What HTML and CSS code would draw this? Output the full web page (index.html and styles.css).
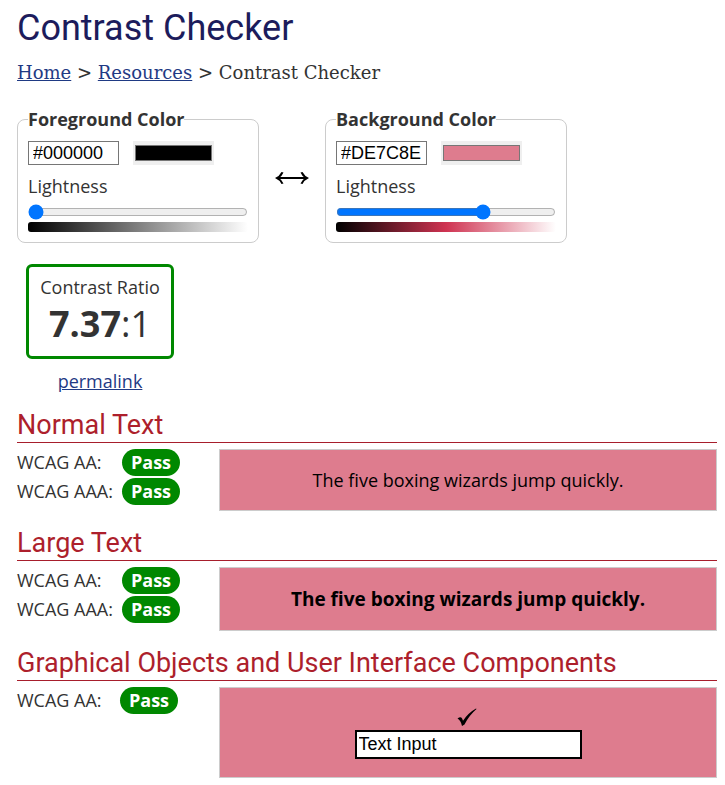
FILE: index.html
```html
<!DOCTYPE html>
<html lang="en">
<head>
<meta charset="utf-8">
<meta name="viewport" content="width=device-width, initial-scale=1">
<title>Contrast Checker</title>
<link rel="stylesheet" href="styles.css">
</head>
<body>
<main>
  <h1>Contrast Checker</h1>
  <nav class="breadcrumb"><a href="#">Home</a> &gt; <a href="#">Resources</a> &gt; Contrast Checker</nav>

  <form class="pickers">
    <fieldset>
      <legend><label for="fg">Foreground Color</label></legend>
      <div class="values">
        <input class="hex" id="fg" type="text" value="#000000">
        <input class="swatch" type="color" value="#000000" aria-label="Foreground color picker">
      </div>
      <label class="lightness" for="fg-light">Lightness</label>
      <input class="slider" id="fg-light" type="range" min="0" max="100" value="0">
      <div class="ramp ramp-fg"></div>
    </fieldset>
    <button class="swap" type="button" aria-label="Swap colors">
      <svg viewBox="0 0 34 14" width="34" height="14"><path fill="none" stroke="#000" stroke-width="2" d="M2 7h30"/><path d="M0 7Q4.500 5 6.500 1L8.500 1.500Q7 5 4 7Q7 9 8.500 12.500L6.500 13Q4.500 9 0 7ZM34 7Q29.500 5 27.500 1L25.500 1.500Q27 5 30 7Q27 9 25.500 12.500L27.500 13Q29.500 9 34 7Z"/></svg>
    </button>
    <fieldset>
      <legend><label for="bg">Background Color</label></legend>
      <div class="values">
        <input class="hex" id="bg" type="text" value="#DE7C8E">
        <input class="swatch" type="color" value="#de7c8e" aria-label="Background color picker">
      </div>
      <label class="lightness" for="bg-light">Lightness</label>
      <input class="slider" id="bg-light" type="range" min="0" max="100" value="68">
      <div class="ramp ramp-bg"></div>
    </fieldset>
  </form>

  <div class="result">
    <div class="ratio">Contrast Ratio<div class="number"><b>7.37</b>:1</div></div>
    <a href="#">permalink</a>
  </div>

  <section>
    <h2>Normal Text</h2>
    <div class="check">
      <dl>
        <dt>WCAG AA:</dt><dd>Pass</dd>
        <dt>WCAG AAA:</dt><dd>Pass</dd>
      </dl>
      <div class="sample">The five boxing wizards jump quickly.</div>
    </div>
  </section>

  <section>
    <h2>Large Text</h2>
    <div class="check">
      <dl>
        <dt>WCAG AA:</dt><dd>Pass</dd>
        <dt>WCAG AAA:</dt><dd>Pass</dd>
      </dl>
      <div class="sample large">The five boxing wizards jump quickly.</div>
    </div>
  </section>

  <section>
    <h2>Graphical Objects and User Interface Components</h2>
    <div class="check">
      <dl class="single">
        <dt>WCAG AA:</dt><dd>Pass</dd>
      </dl>
      <div class="sample objects">
        <svg viewBox="0 0 22 18" width="22" height="18"><path d="M0.500 10.500Q3 8.500 4.300 9.500Q5.300 10.500 6 12.800Q11 5 19 0.500L19.500 1Q12 7.500 7.500 16.500L5 18Q4 12.500 0.500 10.500Z"/></svg>
        <input class="demo" type="text" value="Text Input" aria-label="Text Input">
      </div>
    </div>
  </section>
</main>
</body>
</html>
```
FILE: styles.css
```css
* { box-sizing: border-box; }

body {
  margin: 0;
  padding: 6px 8px 8px 17px;
  background: #fff;
  color: #333;
  font: 400 18px/24px "Open Sans", sans-serif;
}

a { color: #1f3a84; }

h1, h2 { margin: 0; font-family: Roboto, sans-serif; font-weight: 400; }

h1 { color: #1c1c5c; font-size: 36px; line-height: 45px; }

.breadcrumb { margin-top: 10px; font: 400 18px/24px "DejaVu Serif", serif; }

.pickers { display: flex; align-items: flex-end; margin-top: 22px; }

fieldset {
  width: 242px;
  min-width: 0;
  margin: 0;
  padding: 10px;
  border: 1px solid #ccc;
  border-radius: 8px;
}

legend { padding: 0; font-weight: 700; }

.values { display: flex; gap: 14px; }

.hex {
  width: 91px;
  height: 24px;
  padding: 0 4px;
  border: 1px solid #767676;
  color: #000;
  font: 18px "Liberation Sans", sans-serif;
}

.swatch {
  width: 81px;
  height: 24px;
  padding: 0;
  border: 0;
  background: #efefef;
}

.swatch::-webkit-color-swatch-wrapper { padding: 4px 2px; }
.swatch::-webkit-color-swatch { border: 1px solid #777; }

.lightness { display: block; margin-top: 9px; }

.slider { display: block; width: 100%; height: 16px; margin: 6px 0 2px; }

.ramp { height: 10px; border-radius: 3px; }
.ramp-fg { background: linear-gradient(to right, #000, #fff); }
.ramp-bg { background: linear-gradient(to right, #000, #cf3351 50%, #fff); }

.swap {
  width: 66px;
  height: 34px;
  margin-bottom: 48px;
  padding: 0;
  border: 0;
  background: none;
}

.swap svg { display: block; margin: 0 auto; }

.result { width: 148px; margin: 21px 0 16px 9px; text-align: center; }

.ratio {
  margin-bottom: 10px;
  padding: 8px 0;
  border: 3px solid #008800;
  border-radius: 6px;
}

.number { font-size: 36px; line-height: 49px; }

section { margin-bottom: 16px; }

h2 {
  margin-bottom: 6px;
  padding-bottom: 1px;
  border-bottom: 1px solid #a71e2c;
  color: #ad1f2c;
  font-size: 27px;
  line-height: 32px;
}

.check { display: grid; grid-template-columns: 202px 1fr; align-items: start; }

dl {
  display: grid;
  grid-template-columns: 105px max-content;
  row-gap: 2px;
  margin: 0;
  line-height: 27px;
}

.single { grid-template-columns: 103px max-content; }

dd {
  margin: 0;
  padding: 0 9px;
  border-radius: 14px;
  background: #008800;
  color: #fff;
  font-weight: 700;
}

.sample {
  padding: 18px 8px;
  border: 1px solid #ccc;
  background: #de7c8e;
  color: #000;
  text-align: center;
}

.large { padding-block: 19px; font-size: 19px; font-weight: 700; }

.objects {
  display: flex;
  flex-direction: column;
  align-items: center;
  gap: 4px;
  padding: 20px 8px 18px;
}

.demo {
  width: 227px;
  height: 29px;
  padding: 0 2px;
  border: 2px solid #000;
  background: #fff;
  color: #000;
  font: 18px "Liberation Sans", sans-serif;
}
```
